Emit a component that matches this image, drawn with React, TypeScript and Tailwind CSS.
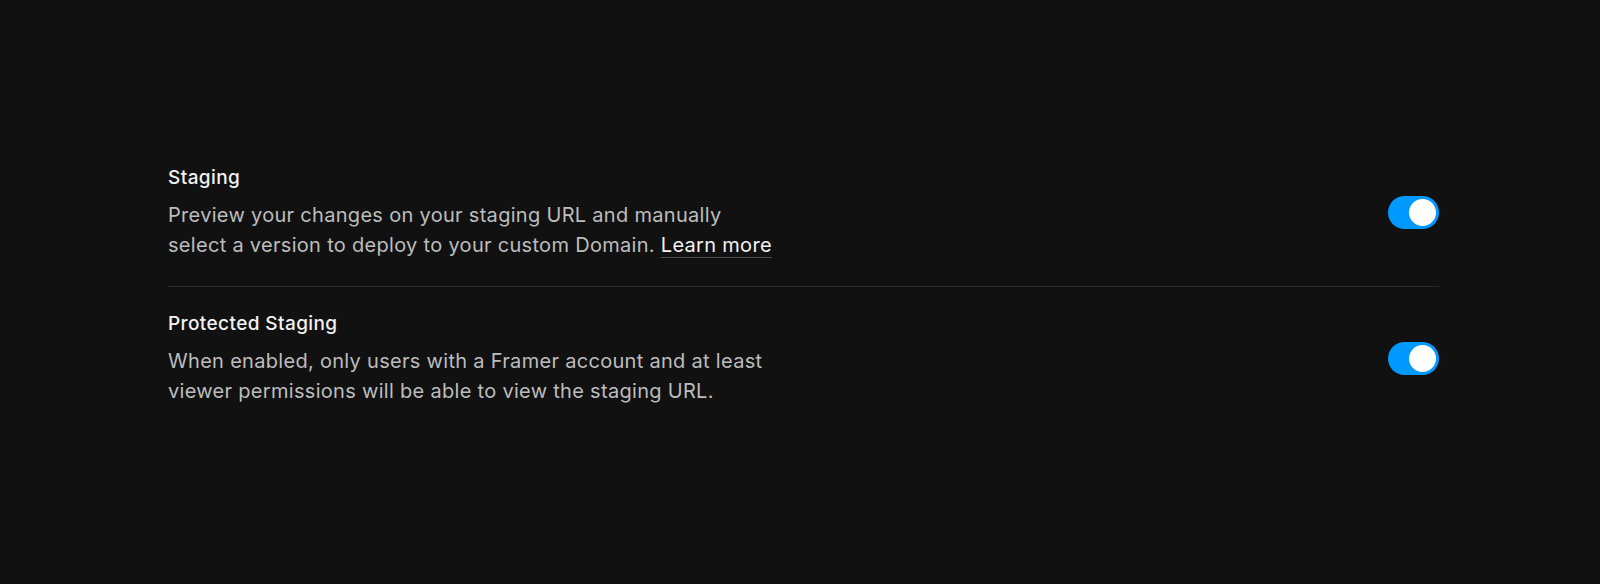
import React from 'react'

type Setting = {
  title: string
  lines: React.ReactNode[]
  enabled: boolean
}

function Toggle({ on }: { on: boolean }) {
  return (
    <button
      type="button"
      role="switch"
      aria-checked={on}
      className={
        'flex h-[33px] w-[51px] shrink-0 items-center rounded-full px-[3px] ' +
        (on ? 'justify-end bg-[#0099ff]' : 'justify-start bg-[#333333]')
      }
    >
      <span className="block h-[27px] w-[27px] rounded-full bg-white" />
    </button>
  )
}

const settings: Setting[] = [
  {
    title: 'Staging',
    lines: [
      'Preview your changes on your staging URL and manually',
      <>
        select a version to deploy to your custom Domain.{' '}
        <a
          href="#"
          className="text-[#f2f2f2] underline decoration-[#4a4a4a] decoration-1 underline-offset-[5px]"
        >
          Learn more
        </a>
      </>,
    ],
    enabled: true,
  },
  {
    title: 'Protected Staging',
    lines: [
      'When enabled, only users with a Framer account and at least',
      'viewer permissions will be able to view the staging URL.',
    ],
    enabled: true,
  },
]

export default function App() {
  return (
    <div
      className="min-h-[584px] w-full bg-[#111111] pt-[140px]"
      style={{ fontFamily: 'Inter, "Noto Sans", sans-serif' }}
    >
      <div className="ml-[168px] w-[1271px]">
        {settings.map((s, i) => (
          <div key={s.title}>
            {i > 0 && <div className="h-px bg-[#2a2a2a]" />}
            <div
              className={
                'flex items-center justify-between ' +
                (i === 0 ? 'pt-[24px] pb-[26px]' : 'pt-[23px] pb-[24px]')
              }
            >
              <div>
                <h2 className="text-[19px] leading-[28px] font-medium tracking-[0.4px] text-[#f2f2f2]">
                  {s.title}
                </h2>
                <p className="mt-[8px] text-[20px] leading-[30px] tracking-[0.3px] text-[#bdbdbd]">
                  {s.lines.map((l, j) => (
                    <React.Fragment key={j}>
                      {l}
                      {j < s.lines.length - 1 && <br />}
                    </React.Fragment>
                  ))}
                </p>
              </div>
              <Toggle on={s.enabled} />
            </div>
          </div>
        ))}
      </div>
    </div>
  )
}
